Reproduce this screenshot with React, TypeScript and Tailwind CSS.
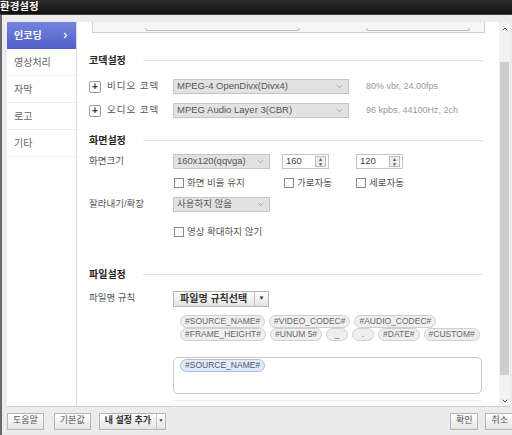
import { ChevronDown, ChevronRight, ChevronUp } from 'lucide-react'

const font = { fontFamily: '"Liberation Sans", "Noto Sans CJK KR", sans-serif' }

function Select({ value, width }: { value: string; width: string }) {
  return (
    <div
      className={`flex h-[15px] ${width} items-center justify-between border border-[#c4c4c4] bg-[#e2e2e2] pl-[3px] pr-[4px] text-[9.5px] text-[#555]`}
    >
      <span>{value}</span>
      <ChevronDown className="h-[9px] w-[9px] text-[#777]" strokeWidth={1.5} />
    </div>
  )
}

function Spinner({ value }: { value: string }) {
  return (
    <div className="flex h-[15px] w-[47px] items-center justify-between border border-[#c4c4c4] bg-white pl-[3px] pr-[2px] text-[9.5px] text-[#444]">
      <span>{value}</span>
      <div className="flex h-[11px] w-[11px] flex-col items-center justify-center border border-[#bbb] bg-[#eee] text-[5px] leading-[5px] text-[#555]">
        <span>▲</span>
        <span>▼</span>
      </div>
    </div>
  )
}

function Check({ label }: { label: string }) {
  return (
    <div className="flex items-center gap-[3px] text-[9.5px] text-[#555]">
      <span className="h-[10px] w-[10px] border border-[#888] bg-white" />
      <span>{label}</span>
    </div>
  )
}

function Section({ title }: { title: string }) {
  return (
    <div className="flex h-[12px] items-center gap-[10px] pr-[16px]">
      <span className="w-[44px] text-[10px] font-bold text-[#222]">{title}</span>
      <div className="h-px flex-1 bg-[#e2e2e2]" />
    </div>
  )
}

function Tag({ text, blue }: { text: string; blue?: boolean }) {
  return (
    <span
      className={`flex h-[13px] items-center rounded-full border px-[4px] text-[8.5px] ${
        blue ? 'border-[#a9bde3] bg-[#e1eafa] text-[#556]' : 'border-[#cfcfcf] bg-[#efefef] text-[#666]'
      }`}
    >
      {text}
    </span>
  )
}

function Btn({ children }: { children: React.ReactNode }) {
  return (
    <div className="flex h-[17px] items-center border border-[#b5b5b5] bg-gradient-to-b from-white to-[#e4e4e4] px-[5px] text-[9px] text-[#555]">
      {children}
    </div>
  )
}

const menu = ['영상처리', '자막', '로고', '기타']

export default function App() {
  return (
    <div style={font} className="flex h-[435px] w-[512px] flex-col overflow-hidden bg-[#ececec]">
      <div className="flex h-[15px] items-center border-b border-[#444] bg-gradient-to-b from-[#2e2e2e] to-[#101010] text-[10.5px] font-bold text-white">
        <span>환경설정</span>
      </div>

      <div className="flex flex-1 flex-col border-l-2 border-[#6a6a6a]">
        <div className="ml-[5px] mr-[2px] mt-[7px] flex h-[385px] border-b border-[#cfcfcf]">
          {/* sidebar */}
          <div className="w-[70px] border-r border-[#dcdcdc] bg-white">
            <div className="flex h-[27px] items-center justify-between bg-gradient-to-b from-[#7484dc] to-[#4f5fc9] pl-[7px] pr-[6px] text-[10px] font-bold text-white">
              <span>인코딩</span>
              <ChevronRight className="h-[9px] w-[9px]" strokeWidth={3} />
            </div>
            {menu.map((m) => (
              <div
                key={m}
                className="flex h-[27px] items-center border-b border-[#ececec] pl-[7px] text-[10px] text-[#666]"
              >
                {m}
              </div>
            ))}
          </div>

          {/* main */}
          <div className="flex flex-1 flex-col overflow-hidden bg-white pl-[12px]">
            <div className="ml-[3px] mr-[14px] flex h-[11px] items-end border-x border-b border-[#cfcfcf] bg-[#f6f6f6]">
              <div className="mb-[1px] ml-[52px] h-[3px] w-[155px] rounded-b border-x border-b border-[#bbb]" />
              <div className="mb-[1px] ml-[66px] h-[3px] w-[104px] rounded-b border-x border-b border-[#bbb]" />
            </div>

            <div className="mt-[21px]">
              <Section title="코덱설정" />
            </div>

            <div className="mt-[13px] flex h-[15px] items-center">
              <div className="flex w-[84px] items-center gap-[6px]">
                <span className="flex h-[12px] w-[12px] items-center justify-center rounded-[2px] border border-[#999] bg-white text-[10px] font-bold leading-none text-[#333]">
                  +
                </span>
                <span className="text-[9.5px] tracking-[1px] text-[#555]">비디오 코덱</span>
              </div>
              <Select value="MPEG-4 OpenDivx(Divx4)" width="w-[176px]" />
              <span className="ml-[17px] text-[9px] text-[#999]">80% vbr, 24.00fps</span>
            </div>

            <div className="mt-[9px] flex h-[15px] items-center">
              <div className="flex w-[84px] items-center gap-[6px]">
                <span className="flex h-[12px] w-[12px] items-center justify-center rounded-[2px] border border-[#999] bg-white text-[10px] font-bold leading-none text-[#333]">
                  +
                </span>
                <span className="text-[9.5px] tracking-[1px] text-[#555]">오디오 코덱</span>
              </div>
              <Select value="MPEG Audio Layer 3(CBR)" width="w-[176px]" />
              <span className="ml-[17px] text-[9px] text-[#999]">96 kpbs, 44100Hz, 2ch</span>
            </div>

            <div className="mt-[16px]">
              <Section title="화면설정" />
            </div>

            <div className="mt-[8px] flex h-[15px] items-center">
              <span className="w-[84px] text-[9.5px] text-[#555]">화면크기</span>
              <Select value="160x120(qqvga)" width="w-[97px]" />
              <div className="ml-[12px]">
                <Spinner value="160" />
              </div>
              <div className="ml-[27px]">
                <Spinner value="120" />
              </div>
            </div>

            <div className="mt-[7px] flex h-[14px] items-center pl-[85px]">
              <div className="w-[110px]">
                <Check label="화면 비율 유지" />
              </div>
              <div className="w-[72px]">
                <Check label="가로자동" />
              </div>
              <Check label="세로자동" />
            </div>

            <div className="mt-[7px] flex h-[15px] items-center">
              <span className="w-[84px] text-[9.5px] text-[#555]">잘라내기/확장</span>
              <Select value="사용하지 않음" width="w-[97px]" />
            </div>

            <div className="mt-[13px] flex h-[14px] items-center pl-[85px]">
              <Check label="영상 확대하지 않기" />
            </div>

            <div className="mt-[29px]">
              <Section title="파일설정" />
            </div>

            <div className="mt-[10px] flex h-[17px] items-center">
              <span className="w-[84px] text-[9.5px] text-[#555]">파일명 규칙</span>
              <div className="flex h-[16px] items-stretch border border-[#b5b5b5] bg-gradient-to-b from-white to-[#e4e4e4] text-[10px] font-bold text-[#333]">
                <span className="flex w-[80px] items-center pl-[6px]">파일명 규칙선택</span>
                <span className="flex w-[14px] items-center justify-center border-l border-[#c4c4c4] text-[6px] text-[#333]">
                  ▼
                </span>
              </div>
            </div>

            <div className="mt-[8px] flex flex-col pl-[91px]">
              <div className="flex gap-[4px]">
                <Tag text="#SOURCE_NAME#" />
                <Tag text="#VIDEO_CODEC#" />
                <Tag text="#AUDIO_CODEC#" />
              </div>
              <div className="flex gap-[4px]">
                <Tag text="#FRAME_HEIGHT#" />
                <Tag text="#UNUM 5#" />
                <span className="flex h-[13px] w-[22px] items-center justify-center rounded-full border border-[#cfcfcf] bg-[#efefef] text-[8.5px] text-[#666]">
                  _
                </span>
                <span className="flex h-[13px] w-[22px] items-center justify-center rounded-full border border-[#cfcfcf] bg-[#efefef] text-[8.5px] text-[#666]">
                  .
                </span>
                <Tag text="#DATE#" />
                <Tag text="#CUSTOM#" />
              </div>
            </div>

            <div className="ml-[84px] mr-[17px] mt-[16px] h-[37px] rounded-[5px] border border-[#c8c8c8] bg-white pl-[6px] pt-[1px]">
              <div className="flex">
                <Tag text="#SOURCE_NAME#" blue />
              </div>
            </div>
            <div className="ml-[84px] mr-[17px] mt-[6px] h-px bg-[#eee]" />
          </div>

          {/* scrollbar */}
          <div className="flex w-[11px] flex-col items-center bg-[#f2f2f2]">
            <ChevronUp className="mt-[3px] h-[8px] w-[8px] text-[#444]" strokeWidth={3} />
            <div className="mt-[29px] h-[313px] w-[9px] bg-[#cdcdcd]" />
            <ChevronDown className="mt-[22px] h-[8px] w-[8px] text-[#444]" strokeWidth={3} />
          </div>
        </div>

        <div className="flex flex-1 items-center justify-between pl-[5px]">
          <div className="flex items-center">
            <Btn>도움말</Btn>
            <div className="ml-[10px]">
              <Btn>기본값</Btn>
            </div>
            <div className="ml-[8px] flex h-[17px] items-stretch border border-[#b5b5b5] bg-gradient-to-b from-white to-[#e4e4e4] text-[9px] font-bold text-[#333]">
              <span className="flex items-center px-[5px]">내 설정 추가</span>
              <span className="flex w-[9px] items-center justify-center border-l border-[#c4c4c4] text-[5px]">▼</span>
            </div>
          </div>
          <div className="-mr-[2px] flex items-center gap-[7px]">
            <Btn>확인</Btn>
            <Btn>취소</Btn>
          </div>
        </div>
      </div>
    </div>
  )
}
